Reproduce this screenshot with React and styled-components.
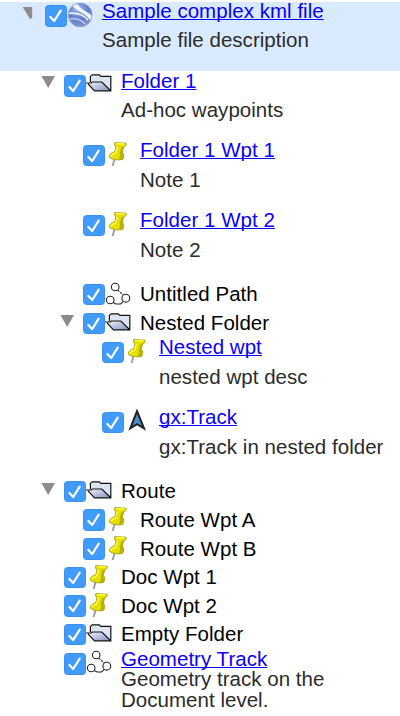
import React from 'react';
import styled, { createGlobalStyle } from 'styled-components';

const GlobalStyle = createGlobalStyle`
  body {
    margin: 0;
    background: #fff;
    font-family: "Liberation Sans", Arial, sans-serif;
    font-size: 20.5px;
    line-height: 20.5px;
    letter-spacing: 0.03px;
    color: #000;
  }
`

const Tree = styled.div`
  width: 400px;
  height: 716px;
  box-sizing: border-box;
  padding-top: 1.6px;
  overflow: hidden;
`

const Row = styled.div`
  display: flex;
  align-items: flex-start;
  box-sizing: border-box;
  height: ${props => (props.$tall ? 69.85 : 28.6)}px;
  padding-left: ${props => 20 + props.$level * 19}px;
  background: ${props => (props.$selected ? '#d9eaff' : 'transparent')};
`

const Toggle = styled.div`
  flex: none;
  width: 25px;
  height: 24px;
`

const Check = styled.div`
  flex: none;
  box-sizing: border-box;
  width: 21.5px;
  height: 21.5px;
  margin-top: ${props => (props.$tall ? 3.7 : 3)}px;
  border-radius: 3.5px;
  border: 1px solid #3b8ff0;
  background: #409bfa;
`

const IconSlot = styled.div`
  flex: none;
  width: 35.5px;
  height: 26px;
`

const Label = styled.div`
  margin-top: ${props => (props.$tall ? -0.8 : 3.5)}px;
  white-space: nowrap;
`

const Link = styled.a`
  color: #0a00fa;
  text-decoration: underline;
  text-decoration-thickness: 1.4px;
  text-underline-offset: 1.2px;
  text-decoration-skip-ink: none;
`

const Description = styled.div`
  margin-top: ${props => (props.$tight ? 0 : 9.2)}px;
  color: #2b2b2b;
  white-space: pre-line;
`

const svgProps = { width: 28, height: 26, viewBox: '0 0 28 26', display: 'block', overflow: 'visible' }

const Arrow = ({ clipped }) => (
  <svg width="25" height="24" viewBox="0 0 25 24" display="block">
    <path d={clipped ? 'M2.6 5H12.2V16L10 17Z' : 'M2.4 5H16L9.2 17Z'} fill="#8c8c8c" />
  </svg>
)

const Tick = () => (
  <svg width="19.5" height="19.5" viewBox="0 0 19.5 19.5" display="block">
    <path d="M4.4 11L8.2 15L14.7 4.7" fill="none" stroke="#fff" strokeWidth="2.2" strokeLinecap="round" strokeLinejoin="round" />
  </svg>
)

const Globe = () => (
  <svg {...svgProps}>
    <defs>
      <radialGradient id="globe" cx=".4" cy=".25" r=".8">
        <stop offset="0" stopColor="#a3b8ec" />
        <stop offset=".55" stopColor="#5c7ccb" />
        <stop offset="1" stopColor="#8b99c8" />
      </radialGradient>
      <clipPath id="globeClip"><circle cx="13.2" cy="12.9" r="12" /></clipPath>
    </defs>
    <circle cx="13.2" cy="12.9" r="12" fill="url(#globe)" />
    <g clipPath="url(#globeClip)" fill="none" stroke="#eef2fd">
      <path d="M5 3C8 9 18 10 24 19L26 15C21 9 13 8 10 1Z" fill="#f3f5fe" stroke="none" />
      <path d="M0 11.5C8 10.5 16 12 21 18" strokeWidth="1.8" />
      <path d="M1 17C8 16 14 17 18 22" strokeWidth="1.6" opacity=".6" />
    </g>
    <circle cx="13.2" cy="12.9" r="11.7" fill="none" stroke="#8798c7" strokeWidth=".8" />
  </svg>
)

const Folder = () => (
  <svg {...svgProps}>
    <defs>
      <linearGradient id="folder" x1="0" y1="0" x2="1" y2="1">
        <stop offset="0" stopColor="#f2f5fd" />
        <stop offset="1" stopColor="#8392c0" />
      </linearGradient>
    </defs>
    <path d="M4.6 10.6V5.3L6.5 3.7H13.2L14.8 5.4H24.7V19.6L16 11Z" fill="#dfe4f4" />
    <path d="M1.3 12.2H5.2L6.2 11H15.8L24.8 19.8H8.5Z" fill="url(#folder)" />
    <path d="M0 12H5.2L6.2 11H15.8L24.8 19.8M4.4 11V5.4L6.2 3.8H13.2L14.8 5.4H24.8V19.8H8.5L2 12.8" fill="none" stroke="#111" strokeWidth="1.2" />
  </svg>
)

const Pin = () => (
  <svg {...svgProps}>
    <path d="M9.6 18L7.6 25" stroke="#999" strokeWidth="1.8" />
    <path d="M9.8 1.6L21 2.2C22 3.6 20.8 5.2 18.8 5.7L17.3 11.2C19.2 12.8 19.2 15.8 17.6 18.4C14.2 19.6 7.1 18.8 4.4 16.2C4.2 13.6 6.3 11.4 9.9 10.7L10.9 5.6C9.4 4.8 9 3.1 9.8 1.6Z" fill="#e6df05" stroke="#97940f" strokeWidth=".8" />
    <path d="M18.6 5.7L17 11.2C18.7 12.8 18.7 15.8 17.4 18L13.4 18.4C15.4 15.5 15.2 13 14.6 12L16.4 5.9Z" fill="#bab200" />
    <path d="M11 2.6L19.5 3M6 15.6Q6.8 13 10.6 12.2L12.4 5.8" fill="none" stroke="#ffff3c" strokeWidth="1.4" />
  </svg>
)

const Path = () => (
  <svg {...svgProps}>
    <g fill="none" stroke="#222" strokeWidth="1.1">
      <circle cx="10.2" cy="6" r="3.8" />
      <circle cx="5.2" cy="19" r="3.8" />
      <circle cx="20.8" cy="17.2" r="3.9" />
      <path d="M12.8 9.1L18.3 14" strokeDasharray="2.2 1" />
      <path d="M8.2 21.5L11 23H15.6L18.4 20.4" />
    </g>
  </svg>
)

const Track = () => (
  <svg {...svgProps}>
    <path d="M13 3.2L20 20.4L13 16.2L6.3 20.4Z" fill="#4a8dcc" stroke="#222" strokeWidth="2" />
  </svg>
)

const icons = { globe: Globe, folder: Folder, pin: Pin, path: Path, track: Track }

const items = [
  { level: 0, icon: 'globe', title: 'Sample complex kml file', desc: 'Sample file description', open: true, selected: true },
  { level: 1, icon: 'folder', title: 'Folder 1', desc: 'Ad-hoc waypoints', open: true },
  { level: 2, icon: 'pin', title: 'Folder 1 Wpt 1', desc: 'Note 1' },
  { level: 2, icon: 'pin', title: 'Folder 1 Wpt 2', desc: 'Note 2' },
  { level: 2, icon: 'path', title: 'Untitled Path' },
  { level: 2, icon: 'folder', title: 'Nested Folder', open: true },
  { level: 3, icon: 'pin', title: 'Nested wpt', desc: 'nested wpt desc' },
  { level: 3, icon: 'track', title: 'gx:Track', desc: 'gx:Track in nested folder' },
  { level: 1, icon: 'folder', title: 'Route', open: true },
  { level: 2, icon: 'pin', title: 'Route Wpt A' },
  { level: 2, icon: 'pin', title: 'Route Wpt B' },
  { level: 1, icon: 'pin', title: 'Doc Wpt 1' },
  { level: 1, icon: 'pin', title: 'Doc Wpt 2' },
  { level: 1, icon: 'folder', title: 'Empty Folder' },
  { level: 1, icon: 'path', title: 'Geometry Track', desc: 'Geometry track on the\nDocument level.', tight: true }
]

const TreeRow = ({ item }) => {
  const Icon = icons[item.icon]
  const tall = Boolean(item.desc)
  return (
    <Row $level={item.level} $tall={tall} $selected={item.selected}>
      <Toggle>{item.open && <Arrow clipped={item.selected} />}</Toggle>
      <Check $tall={tall}><Tick /></Check>
      <IconSlot><Icon /></IconSlot>
      <Label $tall={tall}>
        {tall ? <Link>{item.title}</Link> : item.title}
        {tall && <Description $tight={item.tight}>{item.desc}</Description>}
      </Label>
    </Row>
  )
}

const App = () => (
  <>
    <GlobalStyle />
    <Tree>
      {items.map((item) => <TreeRow key={item.title} item={item} />)}
    </Tree>
  </>
)

export default App
